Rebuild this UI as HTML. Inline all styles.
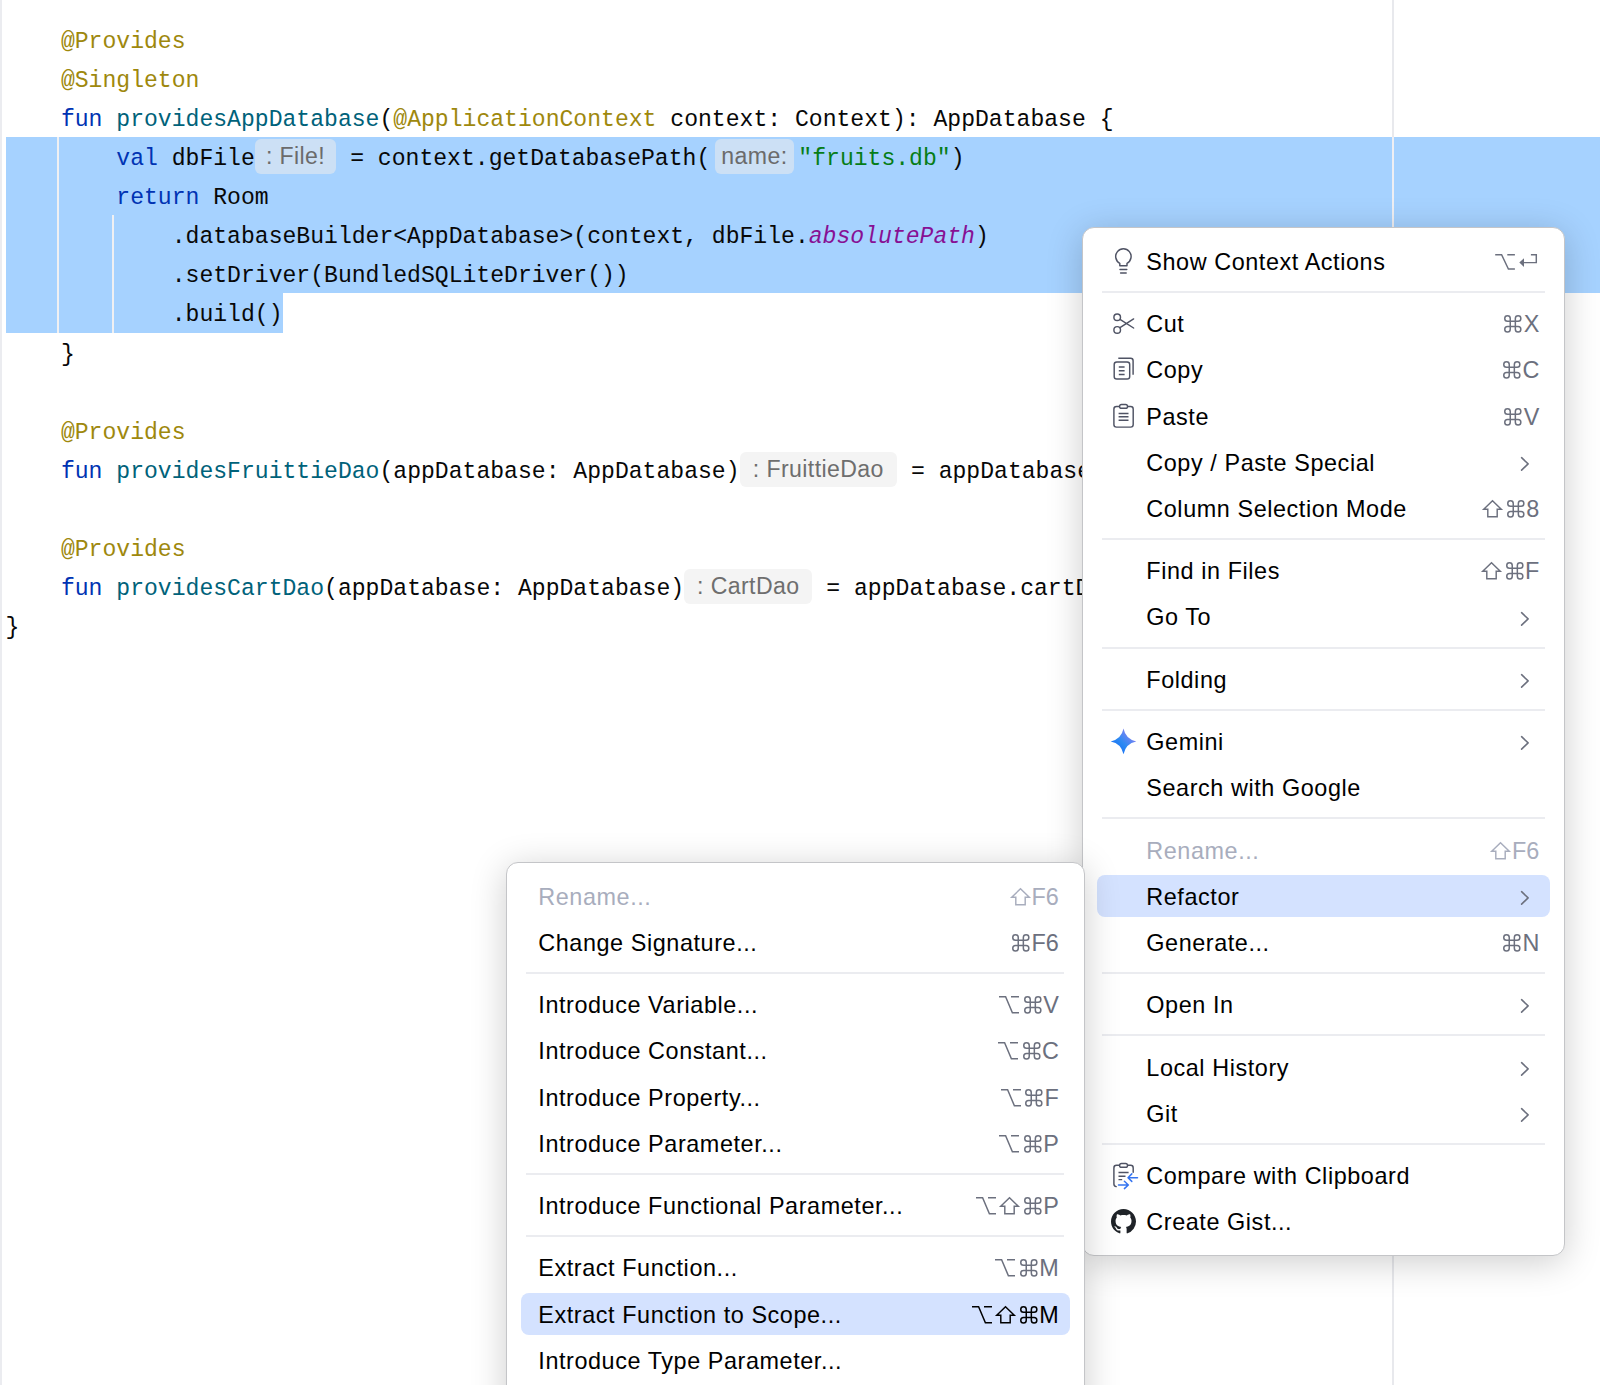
<!DOCTYPE html>
<html><head><meta charset="utf-8"><style>
html,body{margin:0;padding:0;}
body{width:1600px;height:1385px;position:relative;overflow:hidden;background:#FFFFFF;}
.ab{position:absolute;}
.code{position:absolute;left:5.50px;white-space:pre;font-family:"Liberation Mono",monospace;font-size:23.08px;line-height:39.12px;height:39.12px;color:#080808;}
.inl{display:inline-block;box-sizing:border-box;height:35.2px;line-height:35.3px;vertical-align:top;margin-top:-1.2px;border-radius:6px;font-family:"Liberation Sans",sans-serif;font-size:23.1px;letter-spacing:0.4px;text-align:center;}
.menu{position:absolute;background:#FFFFFF;border:1px solid #C4C5C8;border-radius:12px;box-shadow:0 6px 36px rgba(0,0,0,0.20);box-sizing:border-box;overflow:hidden;}
.it{position:absolute;white-space:pre;letter-spacing:0.58px;font-family:"Liberation Sans",sans-serif;font-size:23.40px;line-height:30px;height:30px;color:#000000;}
.dis{color:#A8ADBD;}
.sc{position:absolute;white-space:pre;font-family:"Liberation Sans",sans-serif;font-size:23.40px;line-height:30px;height:30px;color:#6C707E;text-align:right;}
.sep{position:absolute;height:2px;background:#EBECF0;}
.hl{position:absolute;background:#D4E2FF;border-radius:8px;}
svg{position:absolute;overflow:visible;}
.scw{position:absolute;display:flex;align-items:flex-start;height:30px;white-space:pre;}
.scw svg.sy{position:static;display:block;margin-left:4.6px;}
.scw > :first-child{margin-left:0 !important;}
.scl{display:block;font-family:"Liberation Sans",sans-serif;font-size:23.4px;line-height:30px;height:30px;margin-left:1.8px;}
</style></head><body>

<div class="ab" style="left:0;top:0;width:2px;height:1385px;background:#EBECF0"></div>
<div class="ab" style="left:5.5px;top:137.0px;width:1595px;height:156.48px;background:#A6D2FF"></div>
<div class="ab" style="left:5.5px;top:293.48px;width:277.00px;height:39.12px;background:#A6D2FF"></div>
<div class="ab" style="left:1392px;top:0;width:2px;height:137.0px;background:#E8E9ED"></div>
<div class="ab" style="left:1392px;top:137.0px;width:2px;height:156.48px;background:#EFEFF3"></div>
<div class="ab" style="left:1392px;top:293.48px;width:2px;height:1091.52px;background:#E8E9ED"></div>
<div class="ab" style="left:57px;top:137.0px;width:2px;height:195.60px;background:#F0F0F2"></div>
<div class="ab" style="left:112px;top:215.24px;width:2px;height:117.36px;background:#F0F0F2"></div>
<div class="code" style="top:22.60px"><span style="">    </span><span style="color:#9E880D;">@Provides</span></div>
<div class="code" style="top:61.72px"><span style="">    </span><span style="color:#9E880D;">@Singleton</span></div>
<div class="code" style="top:100.84px"><span style="">    </span><span style="color:#0033B3;">fun </span><span style="color:#00627A;">providesAppDatabase</span><span style="">(</span><span style="color:#9E880D;">@ApplicationContext</span><span style=""> context: Context): AppDatabase {</span></div>
<div class="code" style="top:139.96px"><span style="">        </span><span style="color:#0033B3;">val </span><span style="">dbFile</span><span class="inl" style="width:81.5px;margin-left:0px;margin-right:0px;background:#CCE0F5;color:#6B6B6B">: File!</span><span style=""> = context.getDatabasePath(</span><span class="inl" style="width:79.4px;margin-left:4.5px;margin-right:4.2px;background:#CCE0F5;color:#6B6B6B">name:</span><span style="color:#067D17;">&quot;fruits.db&quot;</span><span style="">)</span></div>
<div class="code" style="top:179.08px"><span style="">        </span><span style="color:#0033B3;">return </span><span style="">Room</span></div>
<div class="code" style="top:218.20px"><span style="">            .databaseBuilder&lt;AppDatabase&gt;(context, dbFile.</span><span style="color:#871094;font-style:italic">absolutePath</span><span style="">)</span></div>
<div class="code" style="top:257.32px"><span style="">            .setDriver(BundledSQLiteDriver())</span></div>
<div class="code" style="top:296.44px"><span style="">            .build()</span></div>
<div class="code" style="top:335.56px"><span style="">    }</span></div>
<div class="code" style="top:413.80px"><span style="">    </span><span style="color:#9E880D;">@Provides</span></div>
<div class="code" style="top:452.92px"><span style="">    </span><span style="color:#0033B3;">fun </span><span style="color:#00627A;">providesFruittieDao</span><span style="">(appDatabase: AppDatabase)</span><span class="inl" style="width:157.6px;margin-left:0px;margin-right:0px;background:#F4F4F4;color:#6E6E6E">: FruittieDao</span><span style=""> = appDatabase.fruittieDao()</span></div>
<div class="code" style="top:531.16px"><span style="">    </span><span style="color:#9E880D;">@Provides</span></div>
<div class="code" style="top:570.28px"><span style="">    </span><span style="color:#0033B3;">fun </span><span style="color:#00627A;">providesCartDao</span><span style="">(appDatabase: AppDatabase)</span><span class="inl" style="width:128.3px;margin-left:0px;margin-right:0px;background:#F4F4F4;color:#6E6E6E">: CartDao</span><span style=""> = appDatabase.cartDao()</span></div>
<div class="code" style="top:609.40px"><span style="">}</span></div>
<div class="menu" style="left:1082.0px;top:227.2px;width:482.5px;height:1028.4px"></div>
<div class="sep" style="left:1102px;width:443px;top:290.95px"></div>
<div class="sep" style="left:1102px;width:443px;top:538.05px"></div>
<div class="sep" style="left:1102px;width:443px;top:646.55px"></div>
<div class="sep" style="left:1102px;width:443px;top:708.85px"></div>
<div class="sep" style="left:1102px;width:443px;top:817.35px"></div>
<div class="sep" style="left:1102px;width:443px;top:972.05px"></div>
<div class="sep" style="left:1102px;width:443px;top:1034.35px"></div>
<div class="sep" style="left:1102px;width:443px;top:1142.85px"></div>
<div class="it " style="left:1146.30px;top:246.89px">Show Context Actions</div>
<svg style="left:1490px;top:248px" width="52" height="28" viewBox="1490 248 52 28"><path d="M1495.2,254.7 H1501.6 L1508.4,269.0 H1514.9 M1507.3,254.7 H1514.9" fill="none" stroke="#6C707E" stroke-width="1.45"/><path d="M1530.9,254.7 H1536.3 V262.6 H1523.2" fill="none" stroke="#6C707E" stroke-width="1.45"/><path d="M1519.3,262.6 L1524.0,258.2 V267.0 Z" fill="#6C707E"/></svg>
<!--icon bulb 270.0-->
<div class="it " style="left:1146.30px;top:309.19px">Cut</div>
<div class="scw" style="right:60.70px;top:309.19px"><svg class="sy" width="17.6" height="30" viewBox="0 -6.060000000000002 17.6 30"><path d="M6.25,3.5 A2.75,2.75 0 1 0 3.5,6.25 H14.100000000000001 A2.75,2.75 0 1 0 11.350000000000001,3.5 V14.100000000000001 A2.75,2.75 0 1 0 14.100000000000001,11.350000000000001 H3.5 A2.75,2.75 0 1 0 6.25,14.100000000000001 Z" fill="none" stroke="#6C707E" stroke-width="1.5"/></svg><span class="scl" style="color:#6C707E">X</span></div>
<!--icon cut 332.3-->
<div class="it " style="left:1146.30px;top:355.39px">Copy</div>
<div class="scw" style="right:60.70px;top:355.39px"><svg class="sy" width="17.6" height="30" viewBox="0 -6.060000000000002 17.6 30"><path d="M6.25,3.5 A2.75,2.75 0 1 0 3.5,6.25 H14.100000000000001 A2.75,2.75 0 1 0 11.350000000000001,3.5 V14.100000000000001 A2.75,2.75 0 1 0 14.100000000000001,11.350000000000001 H3.5 A2.75,2.75 0 1 0 6.25,14.100000000000001 Z" fill="none" stroke="#6C707E" stroke-width="1.5"/></svg><span class="scl" style="color:#6C707E">C</span></div>
<!--icon copy 378.5-->
<div class="it " style="left:1146.30px;top:401.59px">Paste</div>
<div class="scw" style="right:60.70px;top:401.59px"><svg class="sy" width="17.6" height="30" viewBox="0 -6.060000000000002 17.6 30"><path d="M6.25,3.5 A2.75,2.75 0 1 0 3.5,6.25 H14.100000000000001 A2.75,2.75 0 1 0 11.350000000000001,3.5 V14.100000000000001 A2.75,2.75 0 1 0 14.100000000000001,11.350000000000001 H3.5 A2.75,2.75 0 1 0 6.25,14.100000000000001 Z" fill="none" stroke="#6C707E" stroke-width="1.5"/></svg><span class="scl" style="color:#6C707E">V</span></div>
<!--icon paste 424.7-->
<div class="it " style="left:1146.30px;top:447.79px">Copy / Paste Special</div>
<svg style="left:1519.70px;top:455.90px" width="10" height="16" viewBox="0 0 10 16"><path d="M1.6,1.7 L8.1,7.9 L1.6,14.1" fill="none" stroke="#6C707E" stroke-width="1.6" stroke-linecap="round" stroke-linejoin="round"/></svg>
<div class="it " style="left:1146.30px;top:493.99px">Column Selection Mode</div>
<div class="scw" style="right:60.70px;top:493.99px"><svg class="sy" width="19" height="30" viewBox="0 -6.060000000000002 19 30"><path d="M9.5,0.72 L18.28,9.1 H14.2 V16.68 H4.8 V9.1 H0.72 Z" fill="none" stroke="#6C707E" stroke-width="1.45" stroke-linejoin="miter"/></svg><svg class="sy" width="17.6" height="30" viewBox="0 -6.060000000000002 17.6 30"><path d="M6.25,3.5 A2.75,2.75 0 1 0 3.5,6.25 H14.100000000000001 A2.75,2.75 0 1 0 11.350000000000001,3.5 V14.100000000000001 A2.75,2.75 0 1 0 14.100000000000001,11.350000000000001 H3.5 A2.75,2.75 0 1 0 6.25,14.100000000000001 Z" fill="none" stroke="#6C707E" stroke-width="1.5"/></svg><span class="scl" style="color:#6C707E">8</span></div>
<div class="it " style="left:1146.30px;top:556.29px">Find in Files</div>
<div class="scw" style="right:60.70px;top:556.29px"><svg class="sy" width="19" height="30" viewBox="0 -6.060000000000002 19 30"><path d="M9.5,0.72 L18.28,9.1 H14.2 V16.68 H4.8 V9.1 H0.72 Z" fill="none" stroke="#6C707E" stroke-width="1.45" stroke-linejoin="miter"/></svg><svg class="sy" width="17.6" height="30" viewBox="0 -6.060000000000002 17.6 30"><path d="M6.25,3.5 A2.75,2.75 0 1 0 3.5,6.25 H14.100000000000001 A2.75,2.75 0 1 0 11.350000000000001,3.5 V14.100000000000001 A2.75,2.75 0 1 0 14.100000000000001,11.350000000000001 H3.5 A2.75,2.75 0 1 0 6.25,14.100000000000001 Z" fill="none" stroke="#6C707E" stroke-width="1.5"/></svg><span class="scl" style="color:#6C707E">F</span></div>
<div class="it " style="left:1146.30px;top:602.49px">Go To</div>
<svg style="left:1519.70px;top:610.60px" width="10" height="16" viewBox="0 0 10 16"><path d="M1.6,1.7 L8.1,7.9 L1.6,14.1" fill="none" stroke="#6C707E" stroke-width="1.6" stroke-linecap="round" stroke-linejoin="round"/></svg>
<div class="it " style="left:1146.30px;top:664.79px">Folding</div>
<svg style="left:1519.70px;top:672.90px" width="10" height="16" viewBox="0 0 10 16"><path d="M1.6,1.7 L8.1,7.9 L1.6,14.1" fill="none" stroke="#6C707E" stroke-width="1.6" stroke-linecap="round" stroke-linejoin="round"/></svg>
<div class="it " style="left:1146.30px;top:727.09px">Gemini</div>
<svg style="left:1519.70px;top:735.20px" width="10" height="16" viewBox="0 0 10 16"><path d="M1.6,1.7 L8.1,7.9 L1.6,14.1" fill="none" stroke="#6C707E" stroke-width="1.6" stroke-linecap="round" stroke-linejoin="round"/></svg>
<!--icon gemini 750.2000000000003-->
<div class="it " style="left:1146.30px;top:773.29px">Search with Google</div>
<div class="it dis" style="left:1146.30px;top:835.59px">Rename...</div>
<div class="scw" style="right:60.70px;top:835.59px"><svg class="sy" width="19" height="30" viewBox="0 -6.060000000000002 19 30"><path d="M9.5,0.72 L18.28,9.1 H14.2 V16.68 H4.8 V9.1 H0.72 Z" fill="none" stroke="#A8ADBD" stroke-width="1.45" stroke-linejoin="miter"/></svg><span class="scl" style="color:#A8ADBD">F6</span></div>
<div class="hl" style="left:1097px;top:875.40px;width:453px;height:42px"></div>
<div class="it " style="left:1146.30px;top:881.79px">Refactor</div>
<svg style="left:1519.70px;top:889.90px" width="10" height="16" viewBox="0 0 10 16"><path d="M1.6,1.7 L8.1,7.9 L1.6,14.1" fill="none" stroke="#6C707E" stroke-width="1.6" stroke-linecap="round" stroke-linejoin="round"/></svg>
<div class="it " style="left:1146.30px;top:927.99px">Generate...</div>
<div class="scw" style="right:60.70px;top:927.99px"><svg class="sy" width="17.6" height="30" viewBox="0 -6.060000000000002 17.6 30"><path d="M6.25,3.5 A2.75,2.75 0 1 0 3.5,6.25 H14.100000000000001 A2.75,2.75 0 1 0 11.350000000000001,3.5 V14.100000000000001 A2.75,2.75 0 1 0 14.100000000000001,11.350000000000001 H3.5 A2.75,2.75 0 1 0 6.25,14.100000000000001 Z" fill="none" stroke="#6C707E" stroke-width="1.5"/></svg><span class="scl" style="color:#6C707E">N</span></div>
<div class="it " style="left:1146.30px;top:990.29px">Open In</div>
<svg style="left:1519.70px;top:998.40px" width="10" height="16" viewBox="0 0 10 16"><path d="M1.6,1.7 L8.1,7.9 L1.6,14.1" fill="none" stroke="#6C707E" stroke-width="1.6" stroke-linecap="round" stroke-linejoin="round"/></svg>
<div class="it " style="left:1146.30px;top:1052.59px">Local History</div>
<svg style="left:1519.70px;top:1060.70px" width="10" height="16" viewBox="0 0 10 16"><path d="M1.6,1.7 L8.1,7.9 L1.6,14.1" fill="none" stroke="#6C707E" stroke-width="1.6" stroke-linecap="round" stroke-linejoin="round"/></svg>
<div class="it " style="left:1146.30px;top:1098.79px">Git</div>
<svg style="left:1519.70px;top:1106.90px" width="10" height="16" viewBox="0 0 10 16"><path d="M1.6,1.7 L8.1,7.9 L1.6,14.1" fill="none" stroke="#6C707E" stroke-width="1.6" stroke-linecap="round" stroke-linejoin="round"/></svg>
<div class="it " style="left:1146.30px;top:1161.09px">Compare with Clipboard</div>
<!--icon compare 1184.2000000000005-->
<div class="it " style="left:1146.30px;top:1207.29px">Create Gist...</div>
<!--icon github 1230.4000000000005-->
<svg style="left:1108px;top:244px" width="32" height="34" viewBox="1108 244 32 34"><path d="M1119.8,263.3 A7.7,7.7 0 1 1 1127.0,263.3 L1127.0,265.8 L1119.8,265.8 Z" fill="none" stroke="#4F5364" stroke-width="1.45" stroke-linejoin="round"/><path d="M1120.0,269.5 H1126.8 M1120.6,272.9 H1126.2" stroke="#4F5364" stroke-width="1.45" stroke-linecap="round"/></svg>
<svg style="left:1108px;top:308px" width="32" height="32" viewBox="1108 308 32 32"><circle cx="1117.2" cy="317.2" r="3.3" fill="none" stroke="#4F5364" stroke-width="1.45"/><circle cx="1117.2" cy="329.9" r="3.3" fill="none" stroke="#4F5364" stroke-width="1.45"/><path d="M1120.0,319.4 L1133.6,328.0 M1120.0,327.7 L1133.6,318.9" stroke="#4F5364" stroke-width="1.45" stroke-linecap="round"/></svg>
<svg style="left:1108px;top:352px" width="32" height="34" viewBox="1108 352 32 34"><rect x="1114.2" y="362.0" width="15.5" height="17.0" rx="2.6" fill="none" stroke="#4F5364" stroke-width="1.45"/><path d="M1118.3,358.3 H1130.6 A2.5,2.5 0 0 1 1133.1,360.8 V374.8" fill="none" stroke="#4F5364" stroke-width="1.45"/><path d="M1118.8,367.0 H1124.6 M1118.8,370.7 H1124.6 M1118.8,374.4 H1124.6" stroke="#4F5364" stroke-width="1.45"/></svg>
<svg style="left:1108px;top:398px" width="32" height="36" viewBox="1108 398 32 36"><path d="M1119.3,406.4 H1116.5 A2.6,2.6 0 0 0 1113.9,409.0 V424.5 A2.6,2.6 0 0 0 1116.5,427.1 H1130.6 A2.6,2.6 0 0 0 1133.2,424.5 V409.0 A2.6,2.6 0 0 0 1130.6,406.4 H1127.8" fill="none" stroke="#4F5364" stroke-width="1.45"/><rect x="1119.6" y="404.4" width="7.9" height="3.9" rx="1.9" fill="none" stroke="#4F5364" stroke-width="1.45"/><path d="M1118.6,413.5 H1128.5 M1118.6,416.8 H1128.5 M1118.6,420.2 H1128.5" stroke="#4F5364" stroke-width="1.45"/></svg>
<svg style="left:1108px;top:726px" width="32" height="32" viewBox="1108 726 32 32"><defs><linearGradient id="gg" x1="0" y1="1" x2="1" y2="0"><stop offset="0" stop-color="#0A5EF8"/><stop offset="0.45" stop-color="#2C8AF2"/><stop offset="1" stop-color="#B27CF2"/></linearGradient></defs><path d="M1123.5,728.6 Q1125.6,739.3 1136.3,741.4 Q1125.6,743.5 1123.5,754.1999999999999 Q1121.4,743.5 1110.7,741.4 Q1121.4,739.3 1123.5,728.6 Z" fill="url(#gg)"/></svg>
<svg style="left:1108px;top:1158px" width="34" height="34" viewBox="1108 1158 34 34"><path d="M1118.8,1165.3 H1116.5 A2.6,2.6 0 0 0 1113.9,1167.9 V1184.0 A2.6,2.6 0 0 0 1116.2,1186.6" fill="none" stroke="#4F5364" stroke-width="1.45" stroke-linecap="round"/><path d="M1128.2,1165.3 H1130.6 A2.6,2.6 0 0 1 1133.2,1167.9 V1172.3" fill="none" stroke="#4F5364" stroke-width="1.45" stroke-linecap="round"/><rect x="1119.6" y="1163.5" width="7.9" height="3.8" rx="1.9" fill="none" stroke="#4F5364" stroke-width="1.45"/><path d="M1118.5,1172.5 H1128.6 M1118.5,1176.2 H1125.5 M1118.5,1179.6 H1122.2" stroke="#4F5364" stroke-width="1.45"/><path d="M1137.5,1177.7 H1128.2 M1131.8,1173.9 L1128.0,1177.7 L1131.8,1181.4" fill="none" stroke="#3574F0" stroke-width="1.5" stroke-linecap="round" stroke-linejoin="round"/><path d="M1118.5,1185.0 H1128.4 M1124.4,1181.3 L1128.3,1185.0 L1124.4,1188.6" fill="none" stroke="#3574F0" stroke-width="1.5" stroke-linecap="round" stroke-linejoin="round"/></svg>
<svg style="left:1110.9px;top:1208.6px" width="25" height="25" viewBox="0 0 16 16"><path fill="#1F2328" d="M8 0C3.58 0 0 3.58 0 8c0 3.54 2.29 6.53 5.47 7.59.4.07.55-.17.55-.38 0-.19-.01-.82-.01-1.49-2.01.37-2.53-.49-2.69-.94-.09-.23-.48-.94-.82-1.13-.28-.15-.68-.52-.01-.53.63-.01 1.08.58 1.23.82.72 1.21 1.87.87 2.33.66.07-.52.28-.87.51-1.07-1.78-.2-3.64-.89-3.64-3.95 0-.87.31-1.59.82-2.15-.08-.2-.36-1.02.08-2.12 0 0 .67-.21 2.2.82.64-.18 1.32-.27 2-.27.68 0 1.36.09 2 .27 1.53-1.04 2.2-.82 2.2-.82.44 1.1.16 1.92.08 2.12.51.56.82 1.27.82 2.15 0 3.07-1.87 3.75-3.65 3.95.29.25.54.73.54 1.48 0 1.07-.01 1.93-.01 2.2 0 .21.15.46.55.38A8.013 8.013 0 0016 8c0-4.42-3.58-8-8-8z"/></svg>
<div class="menu" style="left:506.0px;top:861.6px;width:579.0px;height:563.4px"></div>
<div class="sep" style="left:526px;width:538px;top:971.95px"></div>
<div class="sep" style="left:526px;width:538px;top:1172.85px"></div>
<div class="sep" style="left:526px;width:538px;top:1235.15px"></div>
<div class="it dis" style="left:538.30px;top:881.69px">Rename...</div>
<div class="scw" style="right:541.20px;top:881.69px"><svg class="sy" width="19" height="30" viewBox="0 -6.060000000000002 19 30"><path d="M9.5,0.72 L18.28,9.1 H14.2 V16.68 H4.8 V9.1 H0.72 Z" fill="none" stroke="#A8ADBD" stroke-width="1.45" stroke-linejoin="miter"/></svg><span class="scl" style="color:#A8ADBD">F6</span></div>
<div class="it " style="left:538.30px;top:927.89px">Change Signature...</div>
<div class="scw" style="right:541.20px;top:927.89px"><svg class="sy" width="17.6" height="30" viewBox="0 -6.060000000000002 17.6 30"><path d="M6.25,3.5 A2.75,2.75 0 1 0 3.5,6.25 H14.100000000000001 A2.75,2.75 0 1 0 11.350000000000001,3.5 V14.100000000000001 A2.75,2.75 0 1 0 14.100000000000001,11.350000000000001 H3.5 A2.75,2.75 0 1 0 6.25,14.100000000000001 Z" fill="none" stroke="#6C707E" stroke-width="1.5"/></svg><span class="scl" style="color:#6C707E">F6</span></div>
<div class="it " style="left:538.30px;top:990.19px">Introduce Variable...</div>
<div class="scw" style="right:541.20px;top:990.19px"><svg class="sy" width="20" height="30" viewBox="0 -6.060000000000002 20 30"><path d="M0,0.75 H6.6 L13.4,16.65 H20 M12,0.75 H20" fill="none" stroke="#6C707E" stroke-width="1.5"/></svg><svg class="sy" width="17.6" height="30" viewBox="0 -6.060000000000002 17.6 30"><path d="M6.25,3.5 A2.75,2.75 0 1 0 3.5,6.25 H14.100000000000001 A2.75,2.75 0 1 0 11.350000000000001,3.5 V14.100000000000001 A2.75,2.75 0 1 0 14.100000000000001,11.350000000000001 H3.5 A2.75,2.75 0 1 0 6.25,14.100000000000001 Z" fill="none" stroke="#6C707E" stroke-width="1.5"/></svg><span class="scl" style="color:#6C707E">V</span></div>
<div class="it " style="left:538.30px;top:1036.39px">Introduce Constant...</div>
<div class="scw" style="right:541.20px;top:1036.39px"><svg class="sy" width="20" height="30" viewBox="0 -6.060000000000002 20 30"><path d="M0,0.75 H6.6 L13.4,16.65 H20 M12,0.75 H20" fill="none" stroke="#6C707E" stroke-width="1.5"/></svg><svg class="sy" width="17.6" height="30" viewBox="0 -6.060000000000002 17.6 30"><path d="M6.25,3.5 A2.75,2.75 0 1 0 3.5,6.25 H14.100000000000001 A2.75,2.75 0 1 0 11.350000000000001,3.5 V14.100000000000001 A2.75,2.75 0 1 0 14.100000000000001,11.350000000000001 H3.5 A2.75,2.75 0 1 0 6.25,14.100000000000001 Z" fill="none" stroke="#6C707E" stroke-width="1.5"/></svg><span class="scl" style="color:#6C707E">C</span></div>
<div class="it " style="left:538.30px;top:1082.59px">Introduce Property...</div>
<div class="scw" style="right:541.20px;top:1082.59px"><svg class="sy" width="20" height="30" viewBox="0 -6.060000000000002 20 30"><path d="M0,0.75 H6.6 L13.4,16.65 H20 M12,0.75 H20" fill="none" stroke="#6C707E" stroke-width="1.5"/></svg><svg class="sy" width="17.6" height="30" viewBox="0 -6.060000000000002 17.6 30"><path d="M6.25,3.5 A2.75,2.75 0 1 0 3.5,6.25 H14.100000000000001 A2.75,2.75 0 1 0 11.350000000000001,3.5 V14.100000000000001 A2.75,2.75 0 1 0 14.100000000000001,11.350000000000001 H3.5 A2.75,2.75 0 1 0 6.25,14.100000000000001 Z" fill="none" stroke="#6C707E" stroke-width="1.5"/></svg><span class="scl" style="color:#6C707E">F</span></div>
<div class="it " style="left:538.30px;top:1128.79px">Introduce Parameter...</div>
<div class="scw" style="right:541.20px;top:1128.79px"><svg class="sy" width="20" height="30" viewBox="0 -6.060000000000002 20 30"><path d="M0,0.75 H6.6 L13.4,16.65 H20 M12,0.75 H20" fill="none" stroke="#6C707E" stroke-width="1.5"/></svg><svg class="sy" width="17.6" height="30" viewBox="0 -6.060000000000002 17.6 30"><path d="M6.25,3.5 A2.75,2.75 0 1 0 3.5,6.25 H14.100000000000001 A2.75,2.75 0 1 0 11.350000000000001,3.5 V14.100000000000001 A2.75,2.75 0 1 0 14.100000000000001,11.350000000000001 H3.5 A2.75,2.75 0 1 0 6.25,14.100000000000001 Z" fill="none" stroke="#6C707E" stroke-width="1.5"/></svg><span class="scl" style="color:#6C707E">P</span></div>
<div class="it " style="left:538.30px;top:1191.09px">Introduce Functional Parameter...</div>
<div class="scw" style="right:541.20px;top:1191.09px"><svg class="sy" width="20" height="30" viewBox="0 -6.060000000000002 20 30"><path d="M0,0.75 H6.6 L13.4,16.65 H20 M12,0.75 H20" fill="none" stroke="#6C707E" stroke-width="1.5"/></svg><svg class="sy" width="19" height="30" viewBox="0 -6.060000000000002 19 30"><path d="M9.5,0.72 L18.28,9.1 H14.2 V16.68 H4.8 V9.1 H0.72 Z" fill="none" stroke="#6C707E" stroke-width="1.45" stroke-linejoin="miter"/></svg><svg class="sy" width="17.6" height="30" viewBox="0 -6.060000000000002 17.6 30"><path d="M6.25,3.5 A2.75,2.75 0 1 0 3.5,6.25 H14.100000000000001 A2.75,2.75 0 1 0 11.350000000000001,3.5 V14.100000000000001 A2.75,2.75 0 1 0 14.100000000000001,11.350000000000001 H3.5 A2.75,2.75 0 1 0 6.25,14.100000000000001 Z" fill="none" stroke="#6C707E" stroke-width="1.5"/></svg><span class="scl" style="color:#6C707E">P</span></div>
<div class="it " style="left:538.30px;top:1253.39px">Extract Function...</div>
<div class="scw" style="right:541.20px;top:1253.39px"><svg class="sy" width="20" height="30" viewBox="0 -6.060000000000002 20 30"><path d="M0,0.75 H6.6 L13.4,16.65 H20 M12,0.75 H20" fill="none" stroke="#6C707E" stroke-width="1.5"/></svg><svg class="sy" width="17.6" height="30" viewBox="0 -6.060000000000002 17.6 30"><path d="M6.25,3.5 A2.75,2.75 0 1 0 3.5,6.25 H14.100000000000001 A2.75,2.75 0 1 0 11.350000000000001,3.5 V14.100000000000001 A2.75,2.75 0 1 0 14.100000000000001,11.350000000000001 H3.5 A2.75,2.75 0 1 0 6.25,14.100000000000001 Z" fill="none" stroke="#6C707E" stroke-width="1.5"/></svg><span class="scl" style="color:#6C707E">M</span></div>
<div class="hl" style="left:521px;top:1293.20px;width:549px;height:42px"></div>
<div class="it " style="left:538.30px;top:1299.59px">Extract Function to Scope...</div>
<div class="scw" style="right:541.20px;top:1299.59px"><svg class="sy" width="20" height="30" viewBox="0 -6.060000000000002 20 30"><path d="M0,0.75 H6.6 L13.4,16.65 H20 M12,0.75 H20" fill="none" stroke="#000000" stroke-width="1.5"/></svg><svg class="sy" width="19" height="30" viewBox="0 -6.060000000000002 19 30"><path d="M9.5,0.72 L18.28,9.1 H14.2 V16.68 H4.8 V9.1 H0.72 Z" fill="none" stroke="#000000" stroke-width="1.45" stroke-linejoin="miter"/></svg><svg class="sy" width="17.6" height="30" viewBox="0 -6.060000000000002 17.6 30"><path d="M6.25,3.5 A2.75,2.75 0 1 0 3.5,6.25 H14.100000000000001 A2.75,2.75 0 1 0 11.350000000000001,3.5 V14.100000000000001 A2.75,2.75 0 1 0 14.100000000000001,11.350000000000001 H3.5 A2.75,2.75 0 1 0 6.25,14.100000000000001 Z" fill="none" stroke="#000000" stroke-width="1.5"/></svg><span class="scl" style="color:#000000">M</span></div>
<div class="it " style="left:538.30px;top:1345.79px">Introduce Type Parameter...</div>
</body></html>
